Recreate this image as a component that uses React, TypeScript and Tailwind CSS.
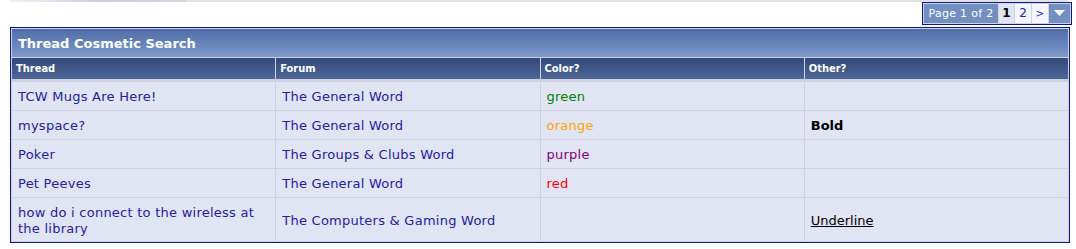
import React from "react";

type Row = {
  thread: string;
  forum: string;
  color?: { label: string; cls: string };
  other?: "bold" | "underline";
  tall?: boolean;
};

const rows: Row[] = [
  { thread: "TCW Mugs Are Here!", forum: "The General Word", color: { label: "green", cls: "text-[#008000]" } },
  { thread: "myspace?", forum: "The General Word", color: { label: "orange", cls: "text-[#ffa500]" }, other: "bold" },
  { thread: "Poker", forum: "The Groups & Clubs Word", color: { label: "purple", cls: "text-[#800080]" } },
  { thread: "Pet Peeves", forum: "The General Word", color: { label: "red", cls: "text-[#ff0000]" } },
  { thread: "how do i connect to the wireless at the library", forum: "The Computers & Gaming Word", other: "underline", tall: true },
];

const cell = "bg-[#e1e4f2] px-[6px] pt-[2px] flex items-center text-[13px] leading-[16px] tracking-[0.25px]";

export default function App() {
  return (
    <div className="w-[1076px] h-[249px] bg-white font-['DejaVu_Sans',Verdana,sans-serif] overflow-hidden">
      {/* cut-off header strip */}
      <div className="flex h-[2px]">
        <div className="w-[10px]" />
        <div className="w-[176px] bg-gradient-to-r from-[#f2f3f8] via-[#c9cee0] to-[#d4d7e2]" />
        <div className="w-[882px] bg-[#e2e2e2]" />
      </div>

      {/* page nav */}
      <div className="flex justify-end pr-[4px]">
        <div className="flex gap-px p-px bg-[#d1d1e1] border border-[#0b198c] text-[12px] leading-[19px]">
          <div className="w-[74px] h-[19px] bg-[#738fbf] text-white text-center text-[11px] tracking-[0.3px]">Page 1 of 2</div>
          <div className="w-[15px] h-[19px] bg-[#e1e4f2] text-black font-bold text-center">1</div>
          <div className="w-[16px] h-[19px] bg-[#f5f5ff] text-[#22229c] text-center">2</div>
          <div className="w-[16px] h-[19px] bg-[#f5f5ff] text-[#22229c] text-center text-[10px]">&gt;</div>
          <div className="w-[21px] h-[19px] bg-[#738fbf] flex items-center justify-center">
            <svg width="11" height="7" viewBox="0 0 11 7">
              <polygon points="0,0 11,0 5.5,6" fill="#ffffff" />
              <polygon points="2,1 9,1 5.5,4.5" fill="#eef1f8" />
            </svg>
          </div>
        </div>
      </div>

      {/* table */}
      <div className="ml-[10px] mt-[2px] w-[1060px] border border-[#0b198c] bg-[#d1d1e1] p-px flex flex-col gap-px">
        <div className="h-[28px] px-[6px] pt-[2px] flex items-center bg-gradient-to-b from-[#4f6ea8] to-[#7e98c9] text-white font-bold text-[13px]">
          Thread Cosmetic Search
        </div>
        <div className="grid grid-cols-4 gap-px h-[21px] mb-[2px]">
          {["Thread", "Forum", "Color?", "Other?"].map((h) => (
            <div
              key={h}
              className="px-[4px] pt-[2px] flex items-center bg-gradient-to-b from-[#34497a] to-[#4d6797] text-white font-bold text-[11px] font-['DejaVu_Sans_Condensed','DejaVu_Sans',sans-serif]"
            >
              {h}
            </div>
          ))}
        </div>
        {rows.map((r, i) => (
          <div key={i} className={`grid grid-cols-4 gap-px ${r.tall ? "h-[43px]" : "h-[28px]"}`}>
            <div className={`${cell} text-[#22229c]`}>{r.thread}</div>
            <div className={`${cell} text-[#22229c]`}>{r.forum}</div>
            <div className={cell}>
              {r.color && <span className={r.color.cls}>{r.color.label}</span>}
            </div>
            <div className={`${cell} text-black`}>
              {r.other === "bold" && <span className="font-bold tracking-normal">Bold</span>}
              {r.other === "underline" && <span className="underline tracking-normal">Underline</span>}
            </div>
          </div>
        ))}
      </div>
    </div>
  );
}
